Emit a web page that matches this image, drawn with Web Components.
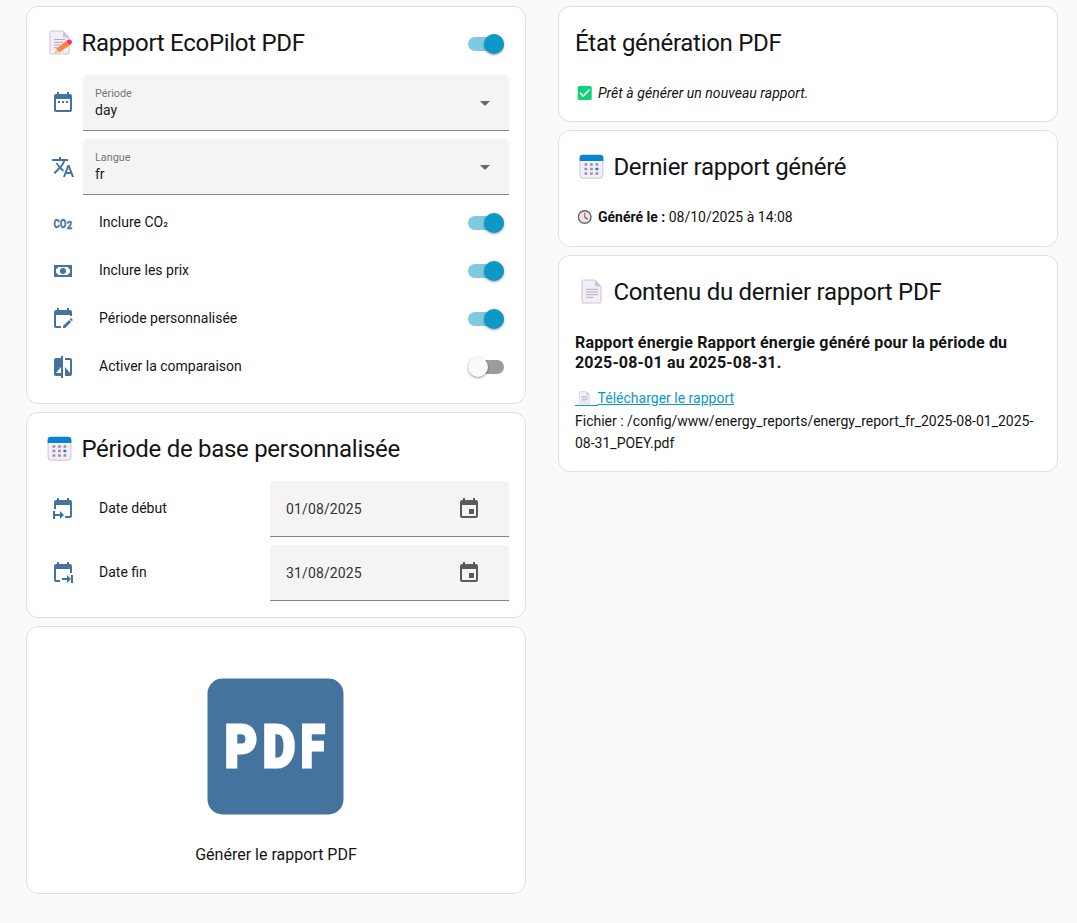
<!DOCTYPE html>
<html lang="fr">
<head>
<meta charset="utf-8">
<title>EcoPilot</title>
<style>
html,body{margin:0;background:#fafafa}
body{font:14px/20px Roboto,"Noto Sans",sans-serif;color:#141414}
</style>
</head>
<body>
<eco-board>
  <eco-column>
    <eco-card style="height:398px">
      <card-title slot="header"><eco-emoji slot="icon" name="memo"></eco-emoji>Rapport EcoPilot PDF<toggle-switch slot="action" on></toggle-switch></card-title>
      <row-list>
        <entity-row icon="range" wide><select-field label="Période" value="day"></select-field></entity-row>
        <entity-row icon="translate" wide><select-field label="Langue" value="fr"></select-field></entity-row>
        <entity-row icon="co2" label="Inclure CO₂"><toggle-switch on></toggle-switch></entity-row>
        <entity-row icon="cash" label="Inclure les prix"><toggle-switch on></toggle-switch></entity-row>
        <entity-row icon="edit" label="Période personnalisée"><toggle-switch on></toggle-switch></entity-row>
        <entity-row icon="compare" label="Activer la comparaison"><toggle-switch></toggle-switch></entity-row>
      </row-list>
    </eco-card>
    <eco-card style="height:206px">
      <card-title slot="header"><eco-emoji slot="icon" name="calendar"></eco-emoji>Période de base personnalisée</card-title>
      <row-list>
        <entity-row icon="start" label="Date début"><date-field value="01/08/2025"></date-field></entity-row>
        <entity-row icon="end" label="Date fin"><date-field value="31/08/2025"></date-field></entity-row>
      </row-list>
    </eco-card>
    <eco-card style="height:268px"><pdf-button>Générer le rapport PDF</pdf-button></eco-card>
  </eco-column>
  <eco-column>
    <eco-card style="height:116px">
      <card-title slot="header">État génération PDF</card-title>
      <status-line icon="check"><i style="letter-spacing:.04px">Prêt à générer un nouveau rapport.</i></status-line>
    </eco-card>
    <eco-card style="height:117px">
      <card-title slot="header"><eco-emoji slot="icon" name="calendar"></eco-emoji>Dernier rapport généré</card-title>
      <status-line icon="clock"><b>Généré le :</b> 08/10/2025 à 14:08</status-line>
    </eco-card>
    <eco-card style="height:217px">
      <card-title slot="header"><eco-emoji slot="icon" name="page"></eco-emoji>Contenu du dernier rapport PDF</card-title>
      <report-content>
        <span slot="heading">Rapport énergie Rapport énergie généré pour la période du 2025-08-01 au 2025-08-31.</span>
        <span slot="link">Télécharger le rapport</span>
        <span slot="file">Fichier : /config/www/energy_reports/energy_report_fr_2025-08-01_2025-08-31_POEY.pdf</span>
      </report-content>
    </eco-card>
  </eco-column>
</eco-board>
<script>
const PATHS = {
  range:'<path d="M9,10H7V12H9V10M13,10H11V12H13V10M17,10H15V12H17V10M19,3H18V1H16V3H8V1H6V3H5C3.89,3 3,3.9 3,5V19A2,2 0 0,0 5,21H19A2,2 0 0,0 21,19V5A2,2 0 0,0 19,3M19,19H5V8H19V19Z"/>',
  translate:'<path d="M12.87,15.07L10.33,12.56L10.36,12.53C12.1,10.59 13.34,8.36 14.07,6H17V4H10V2H8V4H1V6H12.17C11.5,7.92 10.44,9.75 9,11.35C8.07,10.32 7.3,9.19 6.69,8H4.69C5.42,9.63 6.42,11.17 7.67,12.56L2.58,17.58L4,19L9,14L12.11,17.11L12.87,15.07M18.5,10H16.5L12,22H14L15.12,19H19.87L21,22H23L18.5,10M15.88,17L17.5,12.67L19.12,17H15.88Z"/>',
  co2:'<g font-family="Roboto,sans-serif" font-weight="700" stroke="currentColor" stroke-width=".4"><text transform="translate(2.6 16.8) scale(.7 1)" font-size="13.6">CO</text><text transform="translate(15.8 18.4) scale(.9 1)" font-size="10.4">2</text></g>',
  cash:'<path d="M3,6H21V18H3V6M12,9A3,3 0 0,1 15,12A3,3 0 0,1 12,15A3,3 0 0,1 9,12A3,3 0 0,1 12,9M7,8A2,2 0 0,1 5,10V14A2,2 0 0,1 7,16H17A2,2 0 0,1 19,14V10A2,2 0 0,1 17,8H7Z"/>',
  edit:'<path d="M19,3H18V1H16V3H8V1H6V3H5A2,2 0 0,0 3,5V19A2,2 0 0,0 5,21H10V19H5V8H19V9H21V5A2,2 0 0,0 19,3M21.7,13.35L20.7,14.35L18.65,12.35L19.65,11.35C19.85,11.14 20.19,11.13 20.42,11.35L21.7,12.63C21.89,12.83 21.89,13.15 21.7,13.35M12,18.94L18.07,12.88L20.12,14.88L14.06,21H12V18.94Z"/>',
  compare:'<path d="M19,3H14V5H19V18L14,12V21H19A2,2 0 0,0 21,19V5C21,3.89 20.1,3 19,3M10,18H5L10,12M10,3H5C3.89,3 3,3.89 3,5V19A2,2 0 0,0 5,21H10V23H12V1H10V3Z"/>',
  start:'<path d="M19,3H18V1H16V3H8V1H6V3H5A2,2 0 0,0 3,5V12H5V8H19V19H14V21H19A2,2 0 0,0 21,19V5A2,2 0 0,0 19,3M2,14H4V17H9V14L13,18L9,22V19H4V22H2Z"/>',
  end:'<path d="M5,3H6V1H8V3H16V1H18V3H19A2,2 0 0,1 21,5V12H19V8H5V19H9V21H5A2,2 0 0,1 3,19V5A2,2 0 0,1 5,3M20,14H22V22H20V18L16,22V19H11V17H16V14L20,18Z"/>',
  today:'<path d="M19,19H5V8H19M16,1V3H8V1H6V3H5C3.89,3 3,3.89 3,5V19A2,2 0 0,0 5,21H19A2,2 0 0,0 21,19V5C21,3.89 20.1,3 19,3H18V1M17,12H12V17H17V12Z"/>'
};
const page = '<path d="M5.5 1H17l6 6.5V23q0 1-1 1h-17q-1 0-1-1V2q0-1 1-1z" fill="#f3eef8" stroke="#cdc4d6"/><path d="M17 1l6 6.5H18q-1 0-1-1z" fill="#cdc4d6"/><path d="M8 10.3h12M8 13h12M8 15.7h12M8 18.4h7.5" stroke="#b4acbc" stroke-width="1"/>';
const dots = [7.5,13,18.5].map(x=>[10.5,15,19.5].map(y=>`<rect x="${x-1.4}" y="${y-1.3}" width="2.8" height="2.6" rx=".5" fill="${x>18&&y===15?'#0984d0':'#998ea4'}"/>`).join('')).join('');
const EMOJI = {
  page,
  memo: page.replace(/<path d="M8 10.3[^>]*>/,'<path d="M8 9.5h11M8 12.3h9M8 15h6M8 17.7h3" stroke="#b4acbc"/>')+'<path d="M20.2 11L23.4 15.4 13.5 22.2 9 23.5l1.5-5z" fill="#ff8439"/><path d="M10.5 18.7L13.5 22.2 9.2 23.5z" fill="#ffd0a0"/><path d="M20.2 11q3-2.8 5.2-.5 2 2.4-2 4.9z" fill="#f8315f"/>',
  calendar:'<rect x="1.7" y="1.7" width="22.8" height="22.5" rx="3" fill="#f3eef8" stroke="#cdc4d6"/><path d="M1.2 7V4Q1.2.8 4.5.8h17Q25 .8 25 4v3z" fill="#0984d0"/>'+dots,
  check:'<rect x="0" y="0" width="14" height="14" rx="1.5" fill="#13d07a"/><path d="M2.8 7.3l2.8 2.8 5.8-6" fill="none" stroke="#fff" stroke-width="1.5" stroke-linecap="round" stroke-linejoin="round"/>',
  clock:'<circle cx="7" cy="7" r="6.3" fill="#e9e6ea" stroke="#666" stroke-width="1.4"/><path d="M7 7.2V2.8" stroke="#f8315f" stroke-width="1"/><path d="M7 7l3 2.2" stroke="#555" stroke-width="1.2"/>'
};
function define(name, render){
  customElements.define(name, class extends HTMLElement{
    connectedCallback(){
      if(this.shadowRoot) return;
      this.attachShadow({mode:'open'}).innerHTML = render(this);
    }
  });
}
define('eco-board',()=>`<style>:host{display:flex;gap:32px;padding:6px 19px 0 26px;height:917px;box-sizing:border-box}</style><slot></slot>`);
define('eco-column',()=>`<style>:host{display:flex;flex-direction:column;gap:8px;width:500px}</style><slot></slot>`);
define('eco-card',()=>`<style>:host{display:block;box-sizing:border-box;background:#fff;border:1px solid #e0e0e0;border-radius:12px}</style><slot name="header"></slot><slot></slot>`);
define('card-title',()=>`<style>:host{display:flex;align-items:center;height:48px;padding:12px 21px 0 16px;font-size:24px;line-height:48px;letter-spacing:-.288px;white-space:nowrap}
.t{flex:1}</style><slot name="icon"></slot><span class="t"><slot></slot></span><slot name="action"></slot>`);
define('eco-emoji',el=>{
  const n=el.getAttribute('name');
  return `<style>:host{display:block;width:38.4px;height:26px;flex:none}svg{display:block;margin-left:3px}</style><svg width="27" height="26" viewBox="${n==='calendar'?-.4:0} 0 27 26" fill="none">${EMOJI[n]}</svg>`});
define('toggle-switch',el=>{
  const on=el.hasAttribute('on');
  return `<style>:host{display:flex;align-items:center;width:36px;height:20px;flex:none;margin-top:2px}
.track{display:flex;align-items:center;justify-content:${on?'flex-end':'flex-start'};width:36px;height:14px;border-radius:7px;background:${on?'#7ecae0':'#9c9c9c'}}
.thumb{flex:none;width:20px;height:20px;border-radius:50%;background:${on?'#0d99c6':'#fafafa'};box-shadow:0 1px 3px rgba(0,0,0,.3),0 1px 1px rgba(0,0,0,.12)}</style><div class="track"><div class="thumb"></div></div>`});
define('row-list',()=>`<style>:host{display:flex;flex-direction:column;gap:8px;padding:8px 16px 16px}</style><slot></slot>`);
define('mdi-icon',el=>`<style>:host{display:block;width:24px;height:24px;flex:none}svg{display:block}</style><svg width="24" height="24" viewBox="0 0 24 24" fill="currentColor">${PATHS[el.getAttribute('name')]}</svg>`);
define('entity-row',el=>`<style>:host{display:flex;align-items:center;min-height:40px}
mdi-icon{margin-left:8px;color:#44739e}.wide{margin-right:8px}
.label{flex:1;margin-left:24px;margin-top:-2px;white-space:nowrap}
.sub{font-size:13px;line-height:0;vertical-align:2px}
::slotted(toggle-switch){margin-right:5px;margin-top:0!important}</style>
<mdi-icon name="${el.getAttribute('icon')}" class="${el.hasAttribute('wide')?'wide':''}"></mdi-icon>${el.hasAttribute('label')?`<span class="label">${el.getAttribute('label').replace('₂','<span class="sub">₂</span>')}</span>`:''}<slot></slot>`);
define('select-field',el=>`<style>:host{flex:1;display:flex;align-items:center;box-sizing:border-box;height:56px;padding:0 19px 0 12px;background:#f4f4f4;border-bottom:1px solid #868686;border-radius:4px 4px 0 0}
.c{flex:1}.l{font-size:10.8px;line-height:14px;color:#757575;margin-top:2px}.v{line-height:20px;color:#212121;margin-top:-1px}
.a{border:5px solid transparent;border-top-color:#686868;border-bottom:0;margin-top:2px}</style><div class="c"><div class="l">${el.getAttribute('label')}</div><div class="v">${el.getAttribute('value')}</div></div><div class="a"></div>`);
define('date-field',el=>`<style>:host{display:flex;align-items:center;justify-content:space-between;box-sizing:border-box;width:239px;height:56px;padding:0 28px 0 16px;background:#f4f4f4;border-bottom:1px solid #868686;border-radius:4px 4px 0 0;color:#333;letter-spacing:.13px}mdi-icon{color:#5a5a5a}</style><span>${el.getAttribute('value')}</span><mdi-icon name="today"></mdi-icon>`);
define('pdf-button',()=>`<style>:host{display:flex;flex-direction:column;align-items:center;padding-top:51px;font-size:16px;line-height:20px}svg{display:block;margin-bottom:29px}</style>
<svg width="138" height="138" viewBox="0 0 138 138"><rect x=".5" y=".5" width="136" height="136" rx="15" fill="#44739e"/><g fill="#fff" stroke="#fff" stroke-width="3" font-family="Roboto,sans-serif" font-weight="900" font-size="60"><text x="17.8" y="89.3" textLength="32.5" lengthAdjust="spacingAndGlyphs">P</text><text x="55.7" y="89.3" textLength="32.5" lengthAdjust="spacingAndGlyphs">D</text><text x="93.7" y="89.3" textLength="24" lengthAdjust="spacingAndGlyphs">F</text></g></svg><slot></slot>`);
define('status-line',el=>`<style>:host{display:flex;align-items:center;padding:15px 16px 0;height:22px;white-space:pre}svg{display:block;margin:0 6px 0 3px}span{margin-top:-1px}</style><svg width="14" height="14" viewBox="0.3 0 14 14" overflow="visible">${EMOJI[el.getAttribute('icon')]}</svg><span><slot></slot></span>`);
define('report-content',()=>`<style>:host{display:block;padding:17px 16px 0}.h{font-weight:700;font-size:16px;line-height:20px;letter-spacing:.17px}
.link{display:flex;align-items:center;width:max-content;margin-top:14px;height:22px;color:#0d99c6;text-decoration:underline}
.ic{display:flex;width:22.6px;height:17px;box-sizing:border-box;border-bottom:1px solid #0d99c6;margin-top:-1px}.ic svg{display:block;margin:2px 0 0 1.6px}.f{line-height:22px;margin-top:1px;overflow-wrap:anywhere}</style>
<div class="h"><slot name="heading"></slot></div><div class="link"><span class="ic"><svg width="15" height="14" viewBox="0 0 27 26">${page.replace(/#b4acbc/,'#a79fb0')}</svg></span><slot name="link"></slot></div><div class="f"><slot name="file"></slot></div>`);
</script>
</body>
</html>
